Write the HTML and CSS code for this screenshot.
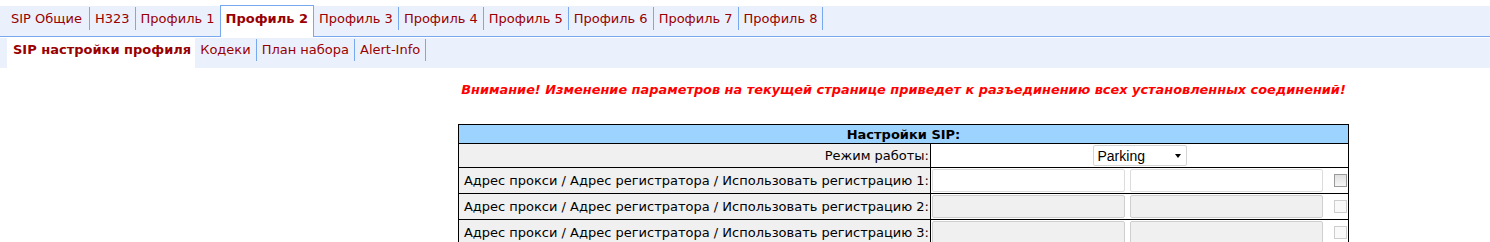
FILE: index.html
```html
<!DOCTYPE html>
<html lang="ru">
<head>
    <meta charset="UTF-8">
    <title>Профиль 2</title>
    <link rel="stylesheet" href="styles.css">
</head>
<body>
    <nav class="tabs">
        <ul class="list">
            <li><a href="javascript:;">SIP Общие</a></li>
            <li><a href="javascript:;">H323</a></li>
            <li><a href="javascript:;">Профиль 1</a></li>
            <li class="active"><a href="javascript:;">Профиль 2</a></li>
            <li><a href="javascript:;">Профиль 3</a></li>
            <li><a href="javascript:;">Профиль 4</a></li>
            <li><a href="javascript:;">Профиль 5</a></li>
            <li><a href="javascript:;">Профиль 6</a></li>
            <li><a href="javascript:;">Профиль 7</a></li>
            <li><a href="javascript:;">Профиль 8</a></li>
        </ul>
    </nav>
    <nav class="subtabs">
        <ul class="list">
            <li class="active"><a href="javascript:;">SIP настройки профиля</a></li>
            <li><a href="javascript:;">Кодеки</a></li>
            <li><a href="javascript:;">План набора</a></li>
            <li><a href="javascript:;">Alert-Info</a></li>
        </ul>
    </nav>

    <section class="page">
        <div class="side"></div>
        <div class="main">
            <p class="warning">Внимание! Изменение параметров на текущей странице приведет к разъединению всех установленных соединений!</p>

            <table class="settings">
                <tr>
                    <th colspan="2">Настройки SIP:</th>
                </tr>
                <tr>
                    <td class="label">Режим работы:</td>
                    <td class="value center">
                        <span class="select">
                            <select>
                                <option>Parking</option>
                                <option>Proxy</option>
                            </select>
                        </span>
                    </td>
                </tr>
                <tr>
                    <td class="label">Адрес прокси / Адрес регистратора / Использовать регистрацию 1:</td>
                    <td class="value">
                        <div class="fields">
                            <input type="text" class="text">
                            <input type="text" class="text">
                            <input type="checkbox" class="check">
                        </div>
                    </td>
                </tr>
                <tr>
                    <td class="label">Адрес прокси / Адрес регистратора / Использовать регистрацию 2:</td>
                    <td class="value">
                        <div class="fields">
                            <input type="text" class="text" disabled>
                            <input type="text" class="text" disabled>
                            <input type="checkbox" class="check" disabled>
                        </div>
                    </td>
                </tr>
                <tr>
                    <td class="label">Адрес прокси / Адрес регистратора / Использовать регистрацию 3:</td>
                    <td class="value">
                        <div class="fields">
                            <input type="text" class="text" disabled>
                            <input type="text" class="text" disabled>
                            <input type="checkbox" class="check" disabled>
                        </div>
                    </td>
                </tr>
            </table>
        </div>
    </section>
</body>
</html>
```

FILE: styles.css
```css
/*reset*/
html,body,p,ul,li,table{margin: 0;padding: 0;}
body{font: 13px "DejaVu Sans", Verdana, sans-serif;color: #000;background: #fff;}
li{list-style: none;}
a{text-decoration: none;color: #990000;}

/*top tabs*/
.tabs{
    margin-top: 6px;
    height: 30px;
    background: #eaf1fd;
    border-bottom: 1px solid #78a9ef;
}
.tabs .list{
    display: flex;
    align-items: flex-start;
    padding-left: 5px;
}
.tabs .list li{
    margin-top: 1px;
    border-right: 1px solid #78a9ef;
}
.tabs .list li a{
    display: block;
    padding: 1px 5px 0;
    line-height: 22px;
}
.tabs .list li:first-child a{
    padding: 1px 7px 0 6px;
}
.tabs .list li.active{
    margin-top: -1px;
    margin-left: -1px;
    height: 32px;
    box-sizing: border-box;
    padding-top: 2px;
    background: #fff;
    border: 1px solid #78a9ef;
    border-bottom: none;
}
.tabs .list li.active a{
    font-weight: bold;
    padding-top: 0;
}

/*sub tabs*/
.subtabs{
    margin-top: 1px;
    height: 30px;
    background: #eaf1fd;
}
.subtabs .list{
    display: flex;
    align-items: flex-start;
    padding-left: 7px;
}
.subtabs .list li{
    margin-top: 1px;
    border-right: 1px solid #78a9ef;
}
.subtabs .list li a{
    display: block;
    padding: 0 5px;
    line-height: 22px;
}
.subtabs .list li.active{
    margin-top: 0;
    height: 30px;
    background: #fff;
    border-right: none;
}
.subtabs .list li.active a{
    font-weight: bold;
    padding: 1px 4px 0 6px;
}

/*content*/
.page{
    display: flex;
}
.side{
    width: 317px;
    flex-shrink: 0;
}
.main{
    flex: 1;
    text-align: center;
}
.warning{
    margin-top: 14px;
    color: #ff0000;
    font-weight: bold;
    font-style: italic;
    font-size: 12.9px;
    line-height: 16px;
}

.settings{
    width: 891px;
    margin: 26px auto 0;
    border-collapse: collapse;
    border: 1px solid #000;
}
.settings th{
    height: 18px;
    padding: 0;
    background: #9dd3ff;
    border: 1px solid #000;
    font-size: 13px;
}
.settings td{
    border: 1px solid #000;
    padding: 1px;
}
.settings .label{
    width: 471px;
    background: #f0f0f0;
    text-align: right;
    line-height: 20px;
    white-space: nowrap;
}
.settings .value{
    background: #fff;
    text-align: left;
}
.settings .center{
    text-align: center;
    height: 21px;
}

.select{
    display: inline-block;
    position: relative;
    vertical-align: middle;
}
.select select{
    -webkit-appearance: none;
    appearance: none;
    width: 94px;
    height: 21px;
    padding: 0 0 0 4px;
    border: 1px solid #d4d4d4;
    border-radius: 2px;
    background: #fff;
    font: 14px "Liberation Sans", Arial, sans-serif;
    color: #000;
}
.select:after{
    content: "";
    position: absolute;
    right: 6px;
    top: 9px;
    border-left: 3px solid transparent;
    border-right: 3px solid transparent;
    border-top: 4px solid #000;
    pointer-events: none;
}

.fields{
    display: flex;
    align-items: center;
    height: 23px;
}
.fields .text{
    width: 193px;
    height: 23px;
    box-sizing: border-box;
    margin: 0 5px 0 0;
    border: 1px solid #dcdcdc;
    border-radius: 2px;
    background: #fff;
    padding: 0 3px;
}
.fields .text:disabled{
    background: #f0f0f0;
    border-color: #cfcfcf;
}
.fields .check{
    -webkit-appearance: none;
    appearance: none;
    width: 13px;
    height: 13px;
    margin: 0 0 0 6px;
    border: 1px solid #9a9a9a;
    background: linear-gradient(#e0e0e0, #f6f6f6);
}
.fields .check:disabled{
    border-color: #cdcdcd;
    background: #f9f9f9;
}
```
